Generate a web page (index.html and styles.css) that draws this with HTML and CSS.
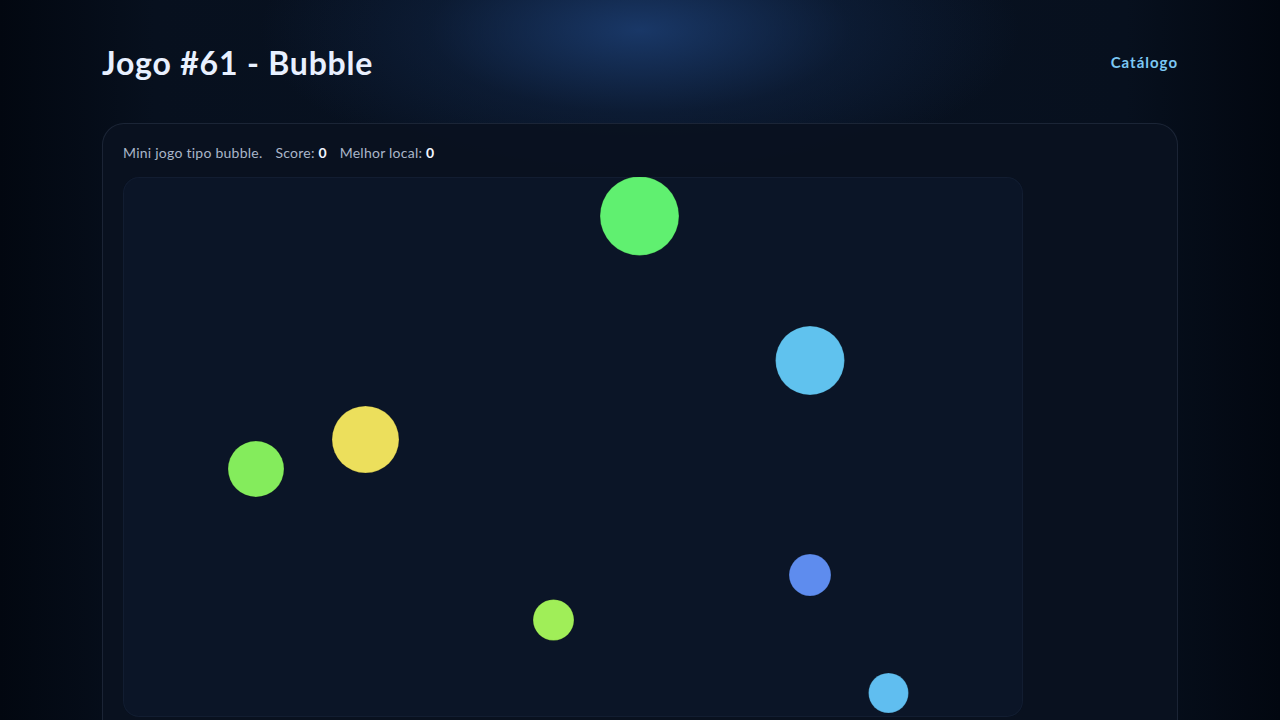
FILE: index.html
```html
<!DOCTYPE html>
<html lang="pt">
<head>
<meta charset="utf-8">
<title>Jogo #61 - Bubble</title>
<link rel="stylesheet" href="styles.css">
</head>
<body>
<div class="wrap">
  <header class="top">
    <h1 class="title">Jogo #61 - Bubble</h1>
    <a class="nav" href="#">Catálogo</a>
  </header>
  <main class="card">
    <p class="info">Mini jogo tipo bubble. <span class="gap"></span>Score: <b>0</b> <span class="gap"></span>Melhor local: <b>0</b></p>
    <div class="stage">
      <svg class="board" width="900" height="540" viewBox="0 0 900 540">
        <circle cx="516.5" cy="39" r="39.5" fill="#60f070" stroke="rgba(0,0,0,0.18)" stroke-width="1"/>
        <circle cx="687" cy="183.5" r="34.5" fill="#60c2ee" stroke="rgba(0,0,0,0.18)" stroke-width="1"/>
        <circle cx="242.5" cy="262.5" r="33.5" fill="#ecdf5c" stroke="rgba(0,0,0,0.18)" stroke-width="1"/>
        <circle cx="133" cy="292" r="28" fill="#84ec5c" stroke="rgba(0,0,0,0.18)" stroke-width="1"/>
        <circle cx="687" cy="398" r="21" fill="#5e8cee" stroke="rgba(0,0,0,0.18)" stroke-width="1"/>
        <circle cx="430.5" cy="443" r="20.5" fill="#a0ee58" stroke="rgba(0,0,0,0.18)" stroke-width="1"/>
        <circle cx="765.5" cy="516" r="20" fill="#60bef0" stroke="rgba(0,0,0,0.18)" stroke-width="1"/>
      </svg>
    </div>
  </main>
</div>
</body>
</html>
```
FILE: styles.css
```css
html, body {
  margin: 0;
  padding: 0;
  height: 100%;
}
body {
  background:
    radial-gradient(ellipse 380px 150px at 640px 30px, rgba(28, 62, 115, 0.85), rgba(20, 45, 85, 0.35) 55%, rgba(8, 16, 32, 0) 100%),
    linear-gradient(90deg, #020710 0%, #07101e 12%, #081222 50%, #07101e 88%, #020710 100%);
  color: #e6eefc;
  font-family: Lato, "Liberation Sans", sans-serif;
  overflow: hidden;
}
.wrap {
  width: 1076px;
  margin: 0 auto;
  padding-top: 38px;
}
.top {
  display: flex;
  justify-content: space-between;
  align-items: center;
  height: 48px;
  margin-bottom: 37px;
}
.title {
  margin: 0;
  font-size: 32px;
  font-weight: bold;
  letter-spacing: 0.8px;
  color: #e8f0ff;
}
.nav {
  color: #7cc8f4;
  font-size: 15px;
  font-weight: bold;
  letter-spacing: 1px;
  text-decoration: none;
}
.card {
  background: rgba(10, 17, 31, 0.92);
  border: 1px solid rgba(140, 160, 200, 0.14);
  border-radius: 22px;
  padding: 19px 20px 20px 20px;
  min-height: 700px;
}
.info {
  margin: 0 0 14px 0;
  font-size: 14px;
  letter-spacing: 0.25px;
  color: #aab6c9;
  line-height: 20px;
}
.info b {
  color: #f2f6ff;
}
.gap {
  display: inline-block;
  width: 9px;
}
.stage {
  width: 900px;
  height: 540px;
  background: #0b1527;
  box-shadow: inset 0 0 0 1px rgba(120, 140, 180, 0.07);
  border-radius: 16px;
  overflow: hidden;
}
.board {
  display: block;
}
```
